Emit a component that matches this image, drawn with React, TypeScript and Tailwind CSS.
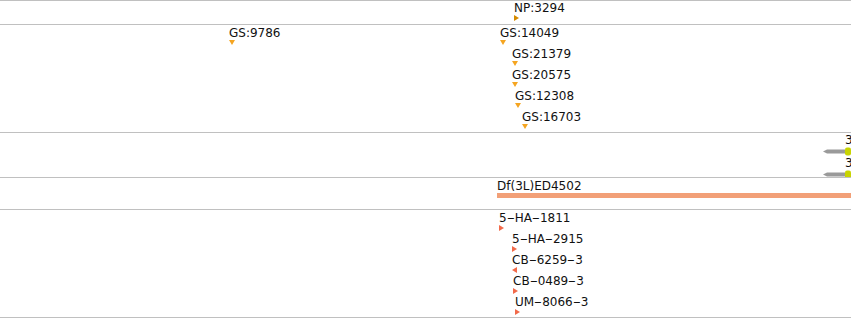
import type { ReactNode } from "react";

type Dir = "down" | "right" | "left";
type Feat = { label: string; pos: string; dir: Dir };

// feature start positions on the track canvas (left/top classes)
const GENE_SPANS: Feat[] = [
  { label: "GS:9786", pos: "left-[229px] top-[2px]", dir: "down" },
  { label: "GS:14049", pos: "left-[500px] top-[2px]", dir: "down" },
  { label: "GS:21379", pos: "left-[512px] top-[23px]", dir: "down" },
  { label: "GS:20575", pos: "left-[512px] top-[44px]", dir: "down" },
  { label: "GS:12308", pos: "left-[515px] top-[65px]", dir: "down" },
  { label: "GS:16703", pos: "left-[522px] top-[86px]", dir: "down" },
];

const INSERTIONS: Feat[] = [
  { label: "5-HA-1811", pos: "left-[499px] top-[2px]", dir: "right" },
  { label: "5-HA-2915", pos: "left-[512px] top-[23px]", dir: "right" },
  { label: "CB-6259-3", pos: "left-[512px] top-[44px]", dir: "left" },
  { label: "CB-0489-3", pos: "left-[513px] top-[65px]", dir: "right" },
  { label: "UM-8066-3", pos: "left-[515px] top-[86px]", dir: "right" },
];

const TRI_POINTS: Record<Dir, string> = {
  down: "0,0 6,0 3,5",
  right: "0,0 5,3 0,6",
  left: "5,0 0,3 5,6",
};

// hyphens in the original labels are drawn as long dashes
function Label({ text }: { text: string }) {
  const parts = text.split("-");
  return (
    <span className="whitespace-nowrap text-[12px] leading-[12px] text-[#111]">
      {parts.map((p, i) => (
        <span key={i}>
          {i > 0 && <span className="inline-block w-[8px] text-center scale-x-[1.9]">-</span>}
          {p}
        </span>
      ))}
    </span>
  );
}

function Feature({ f, fill }: { f: Feat; fill: string }) {
  return (
    <div className={`absolute flex flex-col items-start gap-px ${f.pos}`}>
      <Label text={f.label} />
      <svg width={6} height={6} viewBox="0 0 6 6">
        <polygon points={TRI_POINTS[f.dir]} fill={fill} />
      </svg>
    </div>
  );
}

function Track({ className, children }: { className: string; children?: ReactNode }) {
  return <div className={`relative border-b border-[#c0c0c0] overflow-hidden ${className}`}>{children}</div>;
}

function Transcript({ className }: { className: string }) {
  return (
    <div className={`absolute left-[822px] w-[29px] flex flex-col items-start ${className}`}>
      <span className="ml-[23px] text-[12px] leading-[12px] text-[#111]">3</span>
      <svg width={29} height={9} className="mt-[1px]">
        <polygon points="1,4.5 5,2.5 23,2.5 23,6.5 5,6.5" fill="#9a9a9a" />
        <rect x={23} y={0.5} width={6} height={8} rx={2} fill="#c8d400" />
      </svg>
    </div>
  );
}

export default function App() {
  return (
    <div className="w-[851px] h-[318px] bg-white overflow-hidden border-t border-[#c0c0c0] flex flex-col font-['DejaVu_Sans',sans-serif]">
      <Track className="h-[24px]">
        <Feature f={{ label: "NP:3294", pos: "left-[514px] top-[1px]", dir: "right" }} fill="#d48a00" />
      </Track>

      <Track className="h-[108px]">
        {GENE_SPANS.map((f) => (
          <Feature key={f.label} f={f} fill="#f5a521" />
        ))}
      </Track>

      <Track className="h-[45px]">
        <Transcript className="top-px" />
        <Transcript className="top-[24px]" />
      </Track>

      <Track className="h-[32px]">
        <div className="absolute left-[497px] right-0 top-[2px] flex flex-col">
          <span className="text-[12px] leading-[12px] text-[#111]">Df(3L)ED4502</span>
          <div className="mt-px h-[5px] bg-[#f2a078]" />
        </div>
      </Track>

      <Track className="h-[108px]">
        {INSERTIONS.map((f) => (
          <Feature key={f.label} f={f} fill="#f26a4a" />
        ))}
      </Track>
    </div>
  );
}
